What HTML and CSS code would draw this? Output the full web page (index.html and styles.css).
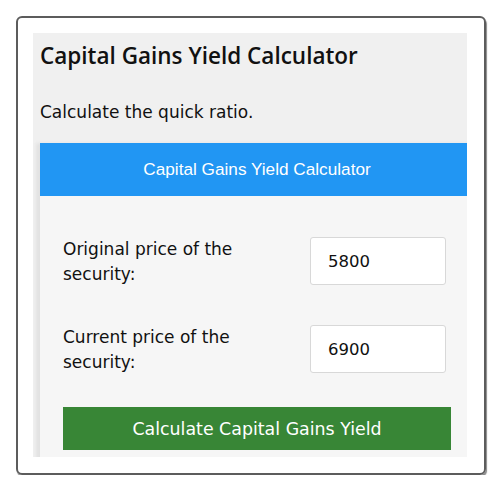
FILE: index.html
```html
<!DOCTYPE html>
<html lang="en">
<head>
    <meta charset="UTF-8">
    <meta name="viewport" content="width=device-width, initial-scale=1.0">
    <title>Capital Gains Yield Calculator</title>
    <link rel="stylesheet" href="styles.css">
</head>
<body>
    <div id="frame">
        <div id="shot">
            <h2 class="pageTitle">Capital Gains Yield Calculator</h2>
            <p class="intro">Calculate the quick ratio.</p>

            <div id="calcBox">
                <div class="calcHead">Capital Gains Yield Calculator</div>
                <div class="calcBody">
                    <div class="calcRow">
                        <label for="originalPrice">Original price of the security:</label>
                        <input id="originalPrice" type="text" value="5800">
                    </div>
                    <div class="calcRow">
                        <label for="currentPrice">Current price of the security:</label>
                        <input id="currentPrice" type="text" value="6900">
                    </div>
                    <button class="calcButton">Calculate Capital Gains Yield</button>
                </div>
            </div>
        </div>
    </div>
</body>
</html>
```

FILE: styles.css
```css
body {
    margin: 0;
    background-color: #fff;
    font-family: "DejaVu Sans", Verdana, sans-serif;
}

#frame {
    margin: 16px 0 0 16px;
    padding: 15px 17px 16px 15px;
    box-sizing: border-box;
    width: 470px;
    height: 459px;
    border: 2px solid #5c5c5c;
    border-radius: 6px;
    box-shadow: 1px 2px 1px #8a8a8a;
}

#shot {
    height: 424px;
    background-color: #f0f0f0;
    overflow: hidden;
    padding: 0 0 0 7px;
}

.pageTitle {
    margin: 0;
    padding-top: 9px;
    font-family: "Open Sans", sans-serif;
    font-size: 22.5px;
    font-weight: 600;
    line-height: 28px;
    color: #111;
}

.intro {
    margin: 30px 0 0;
    font-size: 17px;
    line-height: 24px;
    color: #111;
}

#calcBox {
    margin-top: 19px;
    width: 434px;
    background-color: #f6f6f6;
    box-shadow: -4px 0 3px #e2e2e2;
}

.calcHead {
    height: 53px;
    line-height: 53px;
    text-align: center;
    background-color: #2196f3;
    color: #fff;
    font-family: "Liberation Sans", Arial, sans-serif;
    font-size: 17.2px;
}

.calcBody {
    padding: 41px 23px 20px;
}

.calcRow {
    display: flex;
    align-items: flex-start;
    justify-content: space-between;
    padding-right: 5px;
    margin-bottom: 38px;
}

.calcRow label {
    width: 210px;
    font-size: 17px;
    line-height: 25px;
    color: #111;
}

.calcRow input {
    width: 136px;
    height: 48px;
    box-sizing: border-box;
    padding: 0 17px;
    border: 1px solid #d8d8d8;
    border-radius: 3px;
    background-color: #fff;
    font-family: "DejaVu Sans", Verdana, sans-serif;
    font-size: 16.5px;
    color: #111;
}

.calcButton {
    display: block;
    width: 100%;
    height: 43px;
    margin-top: -6px;
    border: none;
    background-color: #388636;
    color: #fff;
    font-family: "DejaVu Sans", Verdana, sans-serif;
    font-size: 17.4px;
}
```
